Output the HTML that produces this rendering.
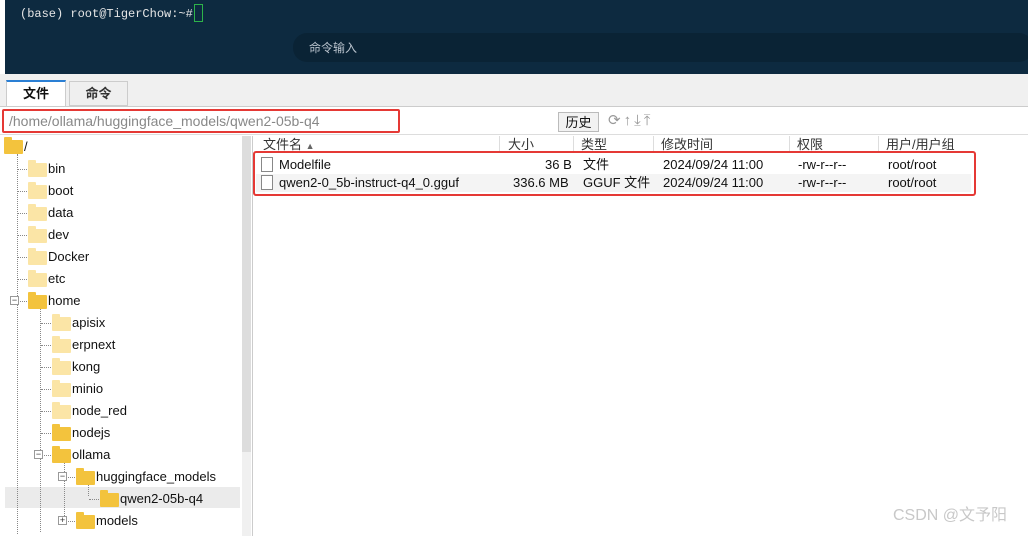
<!DOCTYPE html>
<html><head><meta charset="utf-8"><style>
*{margin:0;padding:0;box-sizing:border-box}
body{width:1028px;height:535px;overflow:hidden;background:#fff;position:relative;font-family:"Liberation Sans","Noto Sans CJK SC",sans-serif;font-size:13px;color:#111;line-height:16px}
.a{position:absolute;white-space:nowrap}
.term{left:5px;top:0;width:1023px;height:74px;background:#0d2a40}
.mono{font-family:"Liberation Mono",monospace;font-size:12px;color:#e6e6e6}
.pill{left:293px;top:33px;width:740px;height:29px;background:#0a2335;border-radius:14px}
.f{position:absolute;width:19px;height:14px;border-radius:1px;background:#f3c33d}
.f:before{content:"";position:absolute;left:0;top:-3px;width:8px;height:4px;background:inherit;border-radius:1px 1px 0 0}
.f.p{background:#fbe5a6}
.t{font-size:13px}
.dl{position:absolute;border-left:1px dotted #888}
.dh{position:absolute;border-top:1px dotted #888;height:0}
.box{position:absolute;width:9px;height:9px;border:1px solid #999;background:#fff;font-size:9px;line-height:7px;text-align:center;color:#333}
.h{color:#333;font-size:13px}
</style></head><body>
<div class="a term"></div>
<div class="a mono" style="left:20px;top:6px">(base) root@TigerChow:~#</div>
<div class="a" style="left:194px;top:4px;width:9px;height:18px;border:1px solid #2db34a"></div>
<div class="a pill"></div>
<div class="a" style="left:309px;top:40px;color:#b8c2cc;font-size:12px">命令输入</div>
<div class="a" style="left:0;top:74px;width:1028px;height:32px;background:#f0f0f0"></div>
<div class="a" style="left:6px;top:80px;width:60px;height:27px;background:#fff;border:1px solid #ccc;border-top:2px solid #2a7fd4;border-bottom:none;text-align:center;line-height:24px;font-weight:bold">文件</div>
<div class="a" style="left:69px;top:81px;width:59px;height:25px;background:#efefef;border:1px solid #ccc;text-align:center;line-height:24px;font-weight:bold;color:#333">命令</div>
<div class="a" style="left:0;top:106px;width:1028px;height:1px;background:#ccc"></div>
<div class="a" style="left:2px;top:109px;width:398px;height:24px;border:2px solid #e53935;border-radius:2px"></div>
<div class="a" style="left:9px;top:113px;color:#888;font-size:14px">/home/ollama/huggingface_models/qwen2-05b-q4</div>
<div class="a" style="left:558px;top:112px;width:41px;height:20px;border:1px solid #bbb;background:#f2f2f2;text-align:center;line-height:19px">历史</div>
<div class="a" style="left:608px;top:113px;color:#999;font-size:15px;letter-spacing:3px">⟳↑⤓⤒</div>
<div class="a" style="left:0;top:134px;width:1028px;height:1px;background:#ddd"></div>
<div class="a" style="left:242px;top:136px;width:9px;height:400px;background:#f0f0f0"></div>
<div class="a" style="left:242px;top:136px;width:9px;height:316px;background:#ddd"></div>
<div class="a" style="left:252px;top:136px;width:1px;height:400px;background:#ccc"></div>
<div class="a" style="left:5px;top:487px;width:235px;height:21px;background:#ebebeb"></div>
<div class="dl" style="left:17px;top:154px;height:380px"></div>
<div class="dl" style="left:40px;top:306px;height:226px"></div>
<div class="dl" style="left:64px;top:462px;height:56px"></div>
<div class="dl" style="left:88px;top:484px;height:12px"></div>
<div class="f" style="left:4px;top:140px"></div><div class="a t" style="left:24px;top:139px">/</div>
<div id="tree"></div>
<div class="a h" style="left:263px;top:137px">文件名 <span style="font-size:9px;color:#666">▲</span></div>
<div class="a h" style="left:508px;top:137px">大小</div>
<div class="a h" style="left:581px;top:137px">类型</div>
<div class="a h" style="left:661px;top:137px">修改时间</div>
<div class="a h" style="left:797px;top:137px">权限</div>
<div class="a h" style="left:886px;top:137px">用户/用户组</div>
<div class="a" style="left:499px;top:136px;width:1px;height:16px;background:#ddd"></div>
<div class="a" style="left:573px;top:136px;width:1px;height:16px;background:#ddd"></div>
<div class="a" style="left:653px;top:136px;width:1px;height:16px;background:#ddd"></div>
<div class="a" style="left:789px;top:136px;width:1px;height:16px;background:#ddd"></div>
<div class="a" style="left:878px;top:136px;width:1px;height:16px;background:#ddd"></div>
<div class="a" style="left:256px;top:174px;width:715px;height:18px;background:#f4f4f4"></div>
<div class="a" style="left:253px;top:151px;width:723px;height:45px;border:2px solid #e53935;border-radius:3px"></div>
<div class="a" style="left:261px;top:157px;width:12px;height:15px;border:1px solid #888;background:#fff"></div>
<div class="a" style="left:261px;top:175px;width:12px;height:15px;border:1px solid #888;background:#fff"></div>
<div class="a" style="left:279px;top:157px">Modelfile</div>
<div class="a" style="left:279px;top:175px">qwen2-0_5b-instruct-q4_0.gguf</div>
<div class="a" style="left:545px;top:157px">36 B</div>
<div class="a" style="left:513px;top:175px">336.6 MB</div>
<div class="a" style="left:583px;top:157px">文件</div>
<div class="a" style="left:583px;top:175px">GGUF 文件</div>
<div class="a" style="left:663px;top:157px">2024/09/24 11:00</div>
<div class="a" style="left:663px;top:175px">2024/09/24 11:00</div>
<div class="a" style="left:798px;top:157px">-rw-r--r--</div>
<div class="a" style="left:798px;top:175px">-rw-r--r--</div>
<div class="a" style="left:888px;top:157px">root/root</div>
<div class="a" style="left:888px;top:175px">root/root</div>
<div class="a" style="left:893px;top:508px;color:#c8c8c8;font-size:16px">CSDN @文予阳</div>
<script>
var items=[["bin",1,1],["boot",1,1],["data",1,1],["dev",1,1],["Docker",1,1],["etc",1,1],["home",1,0,"-"],["apisix",2,1],["erpnext",2,1],["kong",2,1],["minio",2,1],["node_red",2,1],["nodejs",2,0],["ollama",2,0,"-"],["huggingface_models",3,0,"-"],["qwen2-05b-q4",4,0],["models",3,0,"+"]];
var h="";items.forEach(function(it,i){var y=161+i*22;var fx=4+it[1]*24,tx=fx+20;
h+='<div class="dh" style="left:'+(fx-11)+'px;top:'+(y+8)+'px;width:10px"></div>';
if(it[3])h+='<div class="box" style="left:'+(fx-18)+'px;top:'+(y+3)+'px">'+(it[3]=="-"?"−":"+")+'</div>';
h+='<div class="f'+(it[2]?' p':'')+'" style="left:'+fx+'px;top:'+(y+2)+'px"></div><div class="a t" style="left:'+tx+'px;top:'+y+'px">'+it[0]+'</div>';});
document.getElementById("tree").innerHTML=h;
</script>
</body></html>
